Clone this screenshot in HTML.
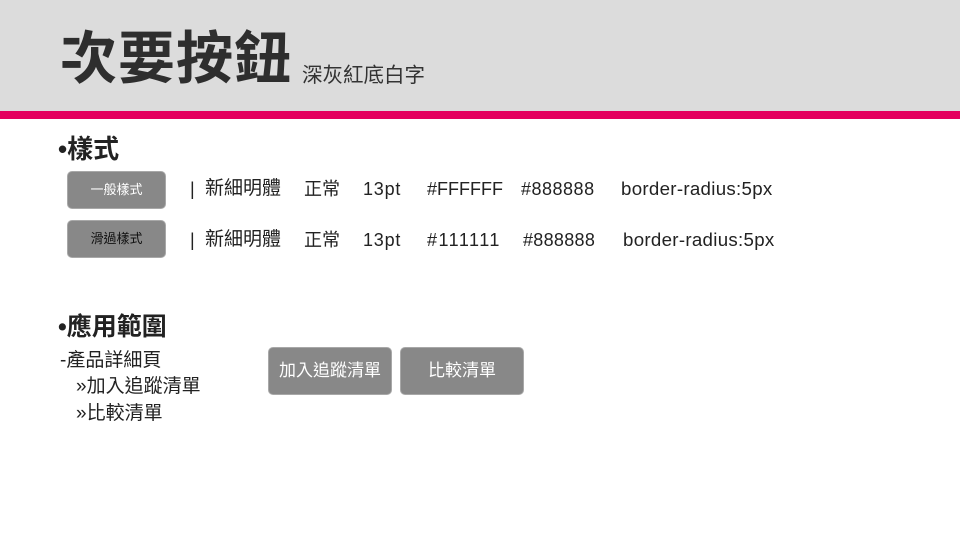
<!DOCTYPE html>
<html><head><meta charset="utf-8"><style>
*{margin:0;padding:0;box-sizing:border-box}
body{width:960px;height:540px;background:#fff;position:relative;overflow:hidden;font-family:"Liberation Sans","Noto Sans CJK TC",sans-serif;color:#222}
.hdr{position:absolute;left:0;top:0;width:960px;height:111px;background:#dcdcdc}
.bar{position:absolute;left:0;top:111px;width:960px;height:8px;background:#e4005e}
.a{position:absolute;white-space:nowrap}
.btn{position:absolute;background:#888;border:1px solid #a8a8a8;border-radius:5px;color:#fff;text-align:center;font-size:13px}
.r{position:absolute;white-space:nowrap;font-size:18px;line-height:26px}
</style></head><body>
<div class="hdr"></div><div class="bar"></div>
<div class="a" style="left:60px;top:24px;font-size:57px;font-weight:bold;color:#2e2e2e;line-height:70px;letter-spacing:1px">次要按鈕</div>
<div class="a" style="left:302px;top:63px;font-size:20.5px;color:#333;line-height:26px">深灰紅底白字</div>
<div class="a" style="left:58px;top:133px;font-size:26px;font-weight:bold;line-height:32px">•樣式</div>
<div class="btn" style="left:67px;top:171px;width:99px;height:38px;line-height:36px">一般樣式</div>
<div class="btn" style="left:67px;top:220px;width:99px;height:38px;line-height:36px;color:#111">滑過樣式</div>
<div class="r" style="left:190px;top:176px">|</div>
<div class="r" style="left:205px;top:176px;font-size:19px">新細明體</div>
<div class="r" style="left:304px;top:176px">正常</div>
<div class="r" style="left:363px;top:176px;letter-spacing:0.8px">13pt</div>
<div class="r" style="left:427px;top:176px">#FFFFFF</div>
<div class="r" style="left:521px;top:176px;letter-spacing:0.5px">#888888</div>
<div class="r" style="left:621px;top:176px;letter-spacing:0.3px;font-size:18.7px">border-radius:5px</div>
<div class="r" style="left:190px;top:227px">|</div>
<div class="r" style="left:205px;top:227px;font-size:19px">新細明體</div>
<div class="r" style="left:304px;top:227px">正常</div>
<div class="r" style="left:363px;top:227px;letter-spacing:0.8px">13pt</div>
<div class="r" style="left:427px;top:227px;letter-spacing:1.5px">#111111</div>
<div class="r" style="left:523px;top:227px;letter-spacing:0.3px">#888888</div>
<div class="r" style="left:623px;top:227px;letter-spacing:0.3px;font-size:18.7px">border-radius:5px</div>
<div class="a" style="left:58px;top:311px;font-size:25px;font-weight:bold;line-height:32px">•應用範圍</div>
<div class="a" style="left:60px;top:348px;font-size:19px;line-height:26px">-產品詳細頁</div>
<div class="a" style="left:76px;top:374px;font-size:19px;line-height:26px">»加入追蹤清單</div>
<div class="a" style="left:76px;top:401px;font-size:19px;line-height:26px">»比較清單</div>
<div class="btn" style="left:268px;top:347px;width:124px;height:48px;line-height:46px;font-size:17px">加入追蹤清單</div>
<div class="btn" style="left:400px;top:347px;width:124px;height:48px;line-height:46px;font-size:17px">比較清單</div>
</body></html>
